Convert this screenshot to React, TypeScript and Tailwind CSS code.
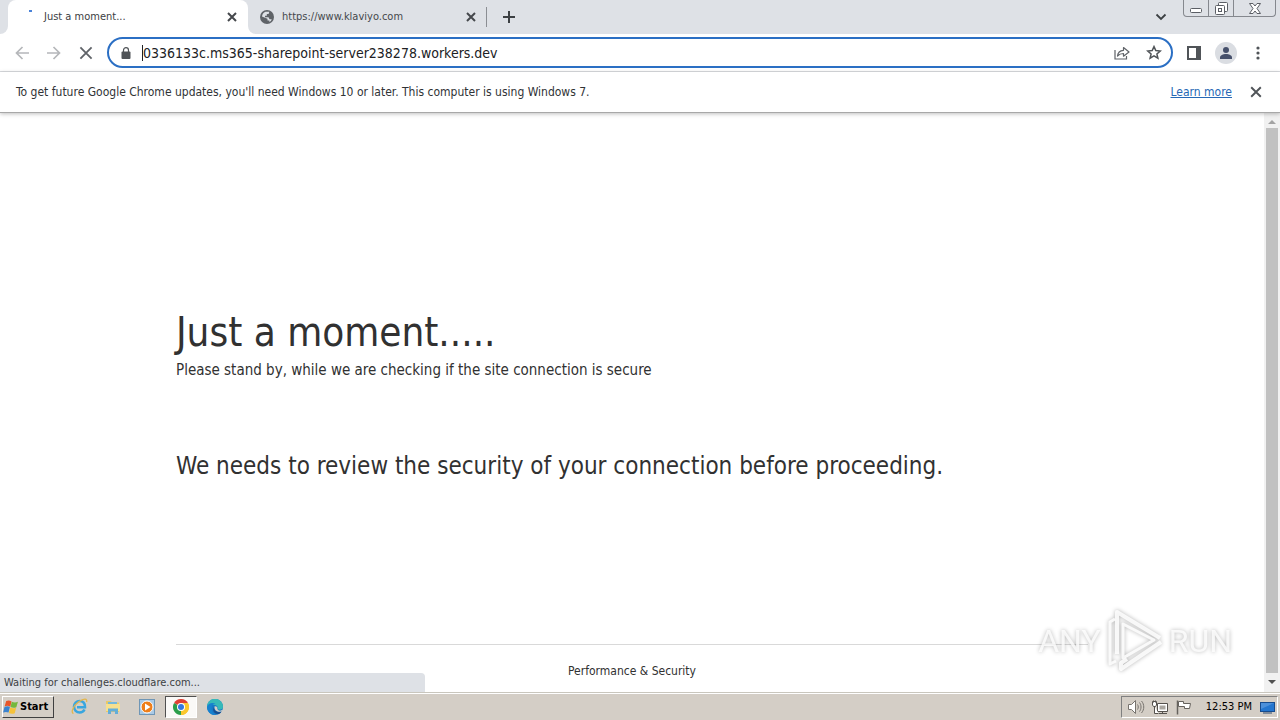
import type { ReactNode } from "react";

function CloseIcon({ size = 10, color = "#45484c", width = 2 }: { size?: number; color?: string; width?: number }) {
  return (
    <svg width={size} height={size} viewBox="0 0 10 10" fill="none" stroke={color} strokeWidth={width}>
      <path d="M1 1l8 8M9 1L1 9" />
    </svg>
  );
}

function GlobeIcon() {
  return (
    <svg width="14" height="14" viewBox="0 0 14 14">
      <circle cx="7" cy="7" r="7" fill="#5f6368" />
      <path d="M5.500 1.700h3.800L8.600 4H6.800v1.700H5v1.500h3.500l1 2h2.200c-.4 1.300-1.200 2.200-2.300 2.700V10.500H7.500V8.700L2 6.500C2.200 4.200 3.500 2.300 5.500 1.700z" fill="#dee1e6" />
    </svg>
  );
}

function TabStrip() {
  return (
    <div className="flex h-[34px] bg-[#dee1e6]">
      <div className="w-2 shrink-0 bg-white">
        <div className="h-full rounded-br-lg bg-[#dee1e6]" />
      </div>
      <div className="flex w-60 shrink-0 items-center rounded-t-lg bg-white pr-[11px] pl-[21px]">
        <span className="mb-3 h-0.5 w-[3px] bg-[#4a82d8]" />
        <span className="ml-3 flex-1 text-[11px] text-[#3c4043]">Just a moment...</span>
        <button aria-label="Close tab"><CloseIcon /></button>
      </div>
      <div className="shrink-0 bg-white">
        <div className="flex h-full w-[238px] items-center rounded-bl-lg bg-[#dee1e6] pr-[10px] pl-3">
          <GlobeIcon />
          <span className="ml-2 flex-1 text-[11px] text-[#45484c]">https://www.klaviyo.com</span>
          <button aria-label="Close tab"><CloseIcon /></button>
        </div>
      </div>
      <span className="mt-[7px] h-5 w-px bg-[#8b8e93]" />
      <button aria-label="New tab" className="ml-4 self-center">
        <svg width="12" height="12" viewBox="0 0 12 12" stroke="#3c4043" strokeWidth="2">
          <path d="M6 0v12M0 6h12" />
        </svg>
      </button>
      <div className="flex-1" />
      <button aria-label="Search tabs" className="mr-4 self-center">
        <svg width="12" height="8" viewBox="0 0 12 8" fill="none" stroke="#3c4043" strokeWidth="1.800">
          <path d="M1.500 1.500L6 6l4.500-4.500" />
        </svg>
      </button>
      <div className="mr-1 flex h-[17px] w-[93px] rounded-b border border-t-0 border-[#85888e]">
        <button aria-label="Minimize" className="flex w-[25px] items-end justify-center border-r border-[#85888e] pb-[3px]">
          <svg width="12" height="5" viewBox="0 0 12 5" fill="#fff" stroke="#5b5e65">
            <rect x=".5" y=".5" width="11" height="4" rx="1" />
          </svg>
        </button>
        <button aria-label="Restore" className="flex w-[25px] items-center justify-center border-r border-[#85888e]">
          <svg width="13" height="13" viewBox="0 0 13 13" fill="#fff" stroke="#5b5e65">
            <rect x="3.500" y=".5" width="9" height="9" rx="1" />
            <rect x=".5" y="3.500" width="9" height="9" rx="1" />
            <rect x="3.500" y="6.500" width="3" height="3" />
          </svg>
        </button>
        <button aria-label="Close" className="flex flex-1 items-center justify-center">
          <svg width="12" height="11" viewBox="0 0 12 11" fill="#fff" stroke="#5b5e65">
            <path d="M.5.5h3.500L6 3l2-2.500h3.500L8 5.500l3.500 5H8L6 8l-2 2.500H.5l3.500-5z" />
          </svg>
        </button>
      </div>
    </div>
  );
}

function Toolbar() {
  return (
    <div className="flex h-[38px] items-center border-b border-[#dadce0] bg-white pr-[18px] pl-[15px]">
      <button aria-label="Back" className="mr-[18px]">
        <svg width="14" height="14" viewBox="0 0 14 14" fill="none" stroke="#b5b7ba" strokeWidth="1.700">
          <path d="M14 7H1.500M7.500 1L1.500 7l6 6" />
        </svg>
      </button>
      <button aria-label="Forward" className="mr-[18px]">
        <svg width="14" height="14" viewBox="0 0 14 14" fill="none" stroke="#b5b7ba" strokeWidth="1.700">
          <path d="M0 7h12.500M6.500 1l6 6-6 6" />
        </svg>
      </button>
      <button aria-label="Stop loading"><CloseIcon size={14} color="#5f6368" width={1.3} /></button>
      <div className="ml-[14px] flex h-[31px] flex-1 items-center rounded-full border-2 border-[#2b6fc4] pr-[9px] pl-3">
        <svg width="10" height="12" viewBox="0 0 10 12">
          <rect x=".5" y="4.500" width="9" height="7.500" rx="1" fill="#505458" />
          <path d="M2.500 5V3.200a2.500 2.500 0 015 0V5" fill="none" stroke="#505458" strokeWidth="1.200" />
        </svg>
        <input
          aria-label="Address and search bar"
          className="ml-[11px] min-w-0 flex-1 border-l border-[#202124] bg-transparent text-sm leading-4 text-[#202124] outline-none"
          defaultValue="0336133c.ms365-sharepoint-server238278.workers.dev"
        />
        <button aria-label="Share this page">
          <svg width="16" height="14" viewBox="0 0 16 14" fill="none" stroke="#5f6368" strokeWidth="1.200">
            <path d="M1 4v9h11.500v-3" />
            <path d="M3.500 10c.3-3.500 2.500-5.500 6-5.700V1.500L15 6l-5.500 4.200V7.500C6.800 7.500 5 8.300 3.500 10z" strokeLinejoin="round" />
          </svg>
        </button>
        <button aria-label="Bookmark this tab" className="ml-4">
          <svg width="16" height="15" viewBox="0 0 16 15" fill="none" stroke="#505458" strokeWidth="1.500">
            <path d="M8 1.600l1.800 4 4.400.4-3.300 2.900 1 4.300L8 10.900l-3.900 2.300 1-4.300L1.800 6l4.400-.4z" />
          </svg>
        </button>
      </div>
      <button aria-label="Side panel" className="ml-[14px]">
        <svg width="14" height="14" viewBox="0 0 14 14">
          <path d="M0 0h14v14H0z" fill="#505458" />
          <path d="M2 2h7v10H2z" fill="#fff" />
        </svg>
      </button>
      <button aria-label="Profile" className="ml-[14px]">
        <svg width="22" height="22" viewBox="0 0 22 22">
          <circle cx="11" cy="11" r="11" fill="#dadde2" />
          <circle cx="11" cy="8" r="3" fill="#46506b" />
          <path d="M5 17v-1.500c0-2.200 3-3.500 6-3.500s6 1.300 6 3.500V17z" fill="#46506b" />
        </svg>
      </button>
      <button aria-label="Chrome menu" className="ml-[17px]">
        <svg width="8" height="14" viewBox="0 0 8 14" fill="#505458">
          <circle cx="4" cy="2" r="1.600" />
          <circle cx="4" cy="7" r="1.600" />
          <circle cx="4" cy="12" r="1.600" />
        </svg>
      </button>
    </div>
  );
}

function InfoBar() {
  return (
    <div className="flex h-[41px] items-center border-b border-[#a8a8a8] bg-white px-4 text-xs text-[#303336] shadow-[0_1px_4px_rgba(0,0,0,0.25)]">
      <p className="flex-1">
        To get future Google Chrome updates, you'll need Windows 10 or later. This computer is using Windows 7.
      </p>
      <a href="#learn" className="mr-[18px] text-[#2668b5] underline">Learn more</a>
      <button aria-label="Dismiss" className="mr-0.5"><CloseIcon size={12} color="#505458" width={1.6} /></button>
    </div>
  );
}

function Scrollbar() {
  return (
    <div className="flex w-4 shrink-0 flex-col items-center bg-[#f1f1f1]">
      <svg className="mt-[6px] mb-1 shrink-0" width="8" height="5" viewBox="0 0 8 5" fill="#a3a3a3">
        <path d="M0 5l4-4 4 4z" />
      </svg>
      <div className="w-3 flex-1 bg-[#c1c1c1]" />
      <svg className="my-[7px] shrink-0" width="8" height="5" viewBox="0 0 8 5" fill="#505050">
        <path d="M0 0l4 4 4-4z" />
      </svg>
    </div>
  );
}

function Watermark() {
  return (
    <div className="pointer-events-none absolute right-12 bottom-[18px] flex items-center gap-1 font-['Roboto',sans-serif] text-[32px] text-white/80 drop-shadow-[0_0_2px_rgba(0,0,0,0.35)]">
      <span>ANY</span>
      <svg width="60" height="66" viewBox="0 0 60 66" fill="none" stroke="#fff" strokeOpacity=".85" strokeWidth="4" strokeLinejoin="round">
        <path d="M12 46V4l43 26" />
        <path d="M18 16v34l31-18z" strokeWidth="3" />
        <path d="M56 34L16 61v-6l6-4" />
        <path d="M10 11l-5 3v42l6-3" strokeWidth="3" />
      </svg>
      <span>RUN</span>
    </div>
  );
}

function TaskButton({ label, active = false, children }: { label: string; active?: boolean; children: ReactNode }) {
  return (
    <button
      aria-label={label}
      className={
        active
          ? "flex h-[22px] w-8 items-center justify-center border border-[#fff] border-t-[#505050] border-l-[#505050] bg-[#faf9f7]"
          : "flex h-[22px] w-8 items-center justify-center"
      }
    >
      {children}
    </button>
  );
}

function Taskbar() {
  return (
    <footer className="flex h-7 shrink-0 items-center border-t border-[#c9c6bd] bg-[#d4cec6] pr-0.5 pl-0.5 text-black shadow-[inset_0_1px_0_#fff]">
      <button className="mt-px flex h-[22px] w-[52px] items-center border border-[#404040] border-t-white border-l-white text-[11px] font-bold">
        <svg className="mr-px shrink-0" width="16" height="15" viewBox="0 0 15 14">
          <path d="M3 1c2-1 3.500-.5 5 .3L6.800 6.300C4.800 5.200 3.600 5.200 1.500 6z" fill="#e8562a" />
          <path d="M8.300 1.600c1.700.8 3.500 1 5.700.1L12.500 6.700c-2 .8-3.800.6-5.500-.2z" fill="#74b83e" />
          <path d="M1.400 6.600c1.900-.9 3.600-.9 5.100-.1l-1.300 5.200C3.300 11 2 11 .1 11.800z" fill="#3b83cf" />
          <path d="M6.800 7c1.700.9 3.500 1 5.500.2L11 12.300c-2 .9-3.800.7-5.500-.1z" fill="#f5c23b" />
        </svg>
        Start
      </button>
      <nav className="ml-[9px] flex gap-0.5">
        <TaskButton label="Internet Explorer">
          <svg width="17" height="17" viewBox="0 0 17 17" fill="none">
            <path d="M13.500 11.500c-1 2-2.700 3-4.800 3C5.500 14.500 3 12 3 8.800S5.500 3 8.700 3s5.600 2.500 5.300 6.200H6" stroke="#39a6df" strokeWidth="2.600" />
            <path d="M2.500 15.500C-.5 14.500 2 8 7.500 4S16.800.5 15.500 4" stroke="#e3b64c" strokeWidth="1.300" />
          </svg>
        </TaskButton>
        <TaskButton label="Windows Explorer">
          <svg width="16" height="16" viewBox="0 0 16 16">
            <path d="M1 2h5l1 1.500h7V13H1z" fill="#e9c968" />
            <path d="M3 3h9v3H3z" fill="#73b9dc" />
            <path d="M1 5h14v7H1z" fill="#f6e08f" />
            <path d="M3 15V9.500h10V15h-3v-2.500H6V15z" fill="#63aed9" />
          </svg>
        </TaskButton>
        <TaskButton label="Media Player">
          <svg width="16" height="16" viewBox="0 0 16 16">
            <rect x=".5" y=".5" width="15" height="15" fill="#a9cae6" stroke="#6f96b6" />
            <circle cx="8" cy="8" r="6" fill="#ee7e19" stroke="#fff" />
            <path d="M6 4.500v7L11.500 8z" fill="#fff" />
          </svg>
        </TaskButton>
        <TaskButton label="Google Chrome" active>
          <svg width="16" height="16" viewBox="0 0 16 16">
            <path d="M8 8L1.070 4A8 8 0 0114.930 4z" fill="#df4034" />
            <path d="M8 8l6.930-4A8 8 0 018 16z" fill="#fbc72d" />
            <path d="M8 8v8A8 8 0 011.070 4z" fill="#2b9e4b" />
            <path d="M8 4h6.930A8 8 0 018 16l3.500-6z" fill="#fbc72d" />
            <circle cx="8" cy="8" r="4" fill="#fff" />
            <circle cx="8" cy="8" r="3" fill="#3478e0" />
          </svg>
        </TaskButton>
        <TaskButton label="Microsoft Edge">
          <svg width="16" height="16" viewBox="0 0 16 16">
            <circle cx="8" cy="8" r="8" fill="#1677c5" />
            <path d="M0 8a8 8 0 0116-.5c.2 3-3.500 4-5.500 2.500.8-1.500-.2-4-3-4C4 6 1.200 6.500 0 8z" fill="#36b9b8" />
            <path d="M0 8c1-4 6-5 8.500-3C5 5 3.800 8.500 5 12c1 3 3.500 4 5.500 3.600A8 8 0 010 8z" fill="#1681cf" />
            <path d="M7 8c-.5 3.500 3 5.500 7.500 4.500-.6 1-1.500 2-2.500 2.500C8 15.500 4.500 12 7 8z" fill="#174e91" />
            <path d="M7.500 7.500c1.500-.8 3.500.8 2.800 2.300C11 12 13.500 12 15 11l1 1c-4 2-9 0-8.500-4.500z" fill="#d4cec6" />
          </svg>
        </TaskButton>
      </nav>
      <div className="flex-1" />
      <div className="mt-px flex h-[22px] items-center border border-white border-t-[#808080] border-l-[#808080] pr-0.5 pl-[6px] text-[11px]">
        <svg width="17" height="14" viewBox="0 0 17 14" fill="none" stroke="#77736e">
          <path d="M.5 4.500h3l4-4v13l-4-4h-3z" fill="#fff" />
          <path d="M9.500 4.500c1 1.500 1 3.500 0 5M11.500 2.500c2 2.500 2 6.500 0 9M13.500 1c3 3.500 3 8.500 0 12" />
        </svg>
        <svg className="ml-[7px]" width="17" height="15" viewBox="0 0 17 15" fill="#fff" stroke="#55514d">
          <path d="M5.500 3.500h10v8h-10z" />
          <path d="M7.500 5.500h6v4h-6z" fill="#aaa6a0" stroke="none" />
          <path d="M7 13.500h8M10.500 11.500v2M2.500 6v7.500h4" />
          <path d="M.5 1.500h4V5L3.500 6.500h-2L.5 5zM1.500.5v2M3.500.5v2" />
        </svg>
        <svg className="ml-[7px]" width="16" height="15" viewBox="0 0 16 15" fill="#fff" stroke="#66625d">
          <path d="M1.500.5v14" strokeWidth="1.500" />
          <path d="M2.500 1.500h5v2h7l-1 5h-5v-2h-6z" />
        </svg>
        <time className="ml-[14px]">12:53 PM</time>
        <svg className="ml-2" width="15" height="13" viewBox="0 0 15 13">
          <rect x=".5" y="1.500" width="14" height="9" fill="#2476cf" stroke="#174c8e" />
          <path d="M1 2h13L1 8z" fill="#4c90da" />
          <path d="M3 12h9" stroke="#314d70" />
        </svg>
      </div>
    </footer>
  );
}

export default function App() {
  return (
    <div className="flex min-h-screen flex-col bg-white font-['DejaVu_Sans_Condensed',Tahoma,sans-serif]">
      <header className="relative z-10 flex flex-col">
        <TabStrip />
        <Toolbar />
        <InfoBar />
      </header>
      <div className="relative flex flex-1">
        <div className="flex min-w-0 flex-1 flex-col">
          <main className="mx-auto flex w-full max-w-[960px] flex-1 flex-col justify-center px-6 pt-8 text-[#313131]">
            <h1 className="text-[40px] leading-[52px]">Just a moment.....</h1>
            <p className="text-[15px] leading-6">Please stand by, while we are checking if the site connection is secure</p>
            <h2 className="mt-[66px] text-2xl leading-9">We needs to review the security of your connection before proceeding.</h2>
          </main>
          <div className="mx-auto w-full max-w-[960px] px-6">
            <p className="border-t border-[#d9d9d9] pt-4 pb-[11px] text-center text-xs leading-5 text-[#313131]">
              Performance &amp; Security
            </p>
          </div>
        </div>
        <Scrollbar />
        <Watermark />
        <div className="absolute bottom-0 left-0 flex h-[19px] w-[425px] items-center rounded-tr bg-[#dee1e6] pt-0.5 pl-1 text-[11px] text-[#3c4043]">
          Waiting for challenges.cloudflare.com...
        </div>
      </div>
      <Taskbar />
    </div>
  );
}
